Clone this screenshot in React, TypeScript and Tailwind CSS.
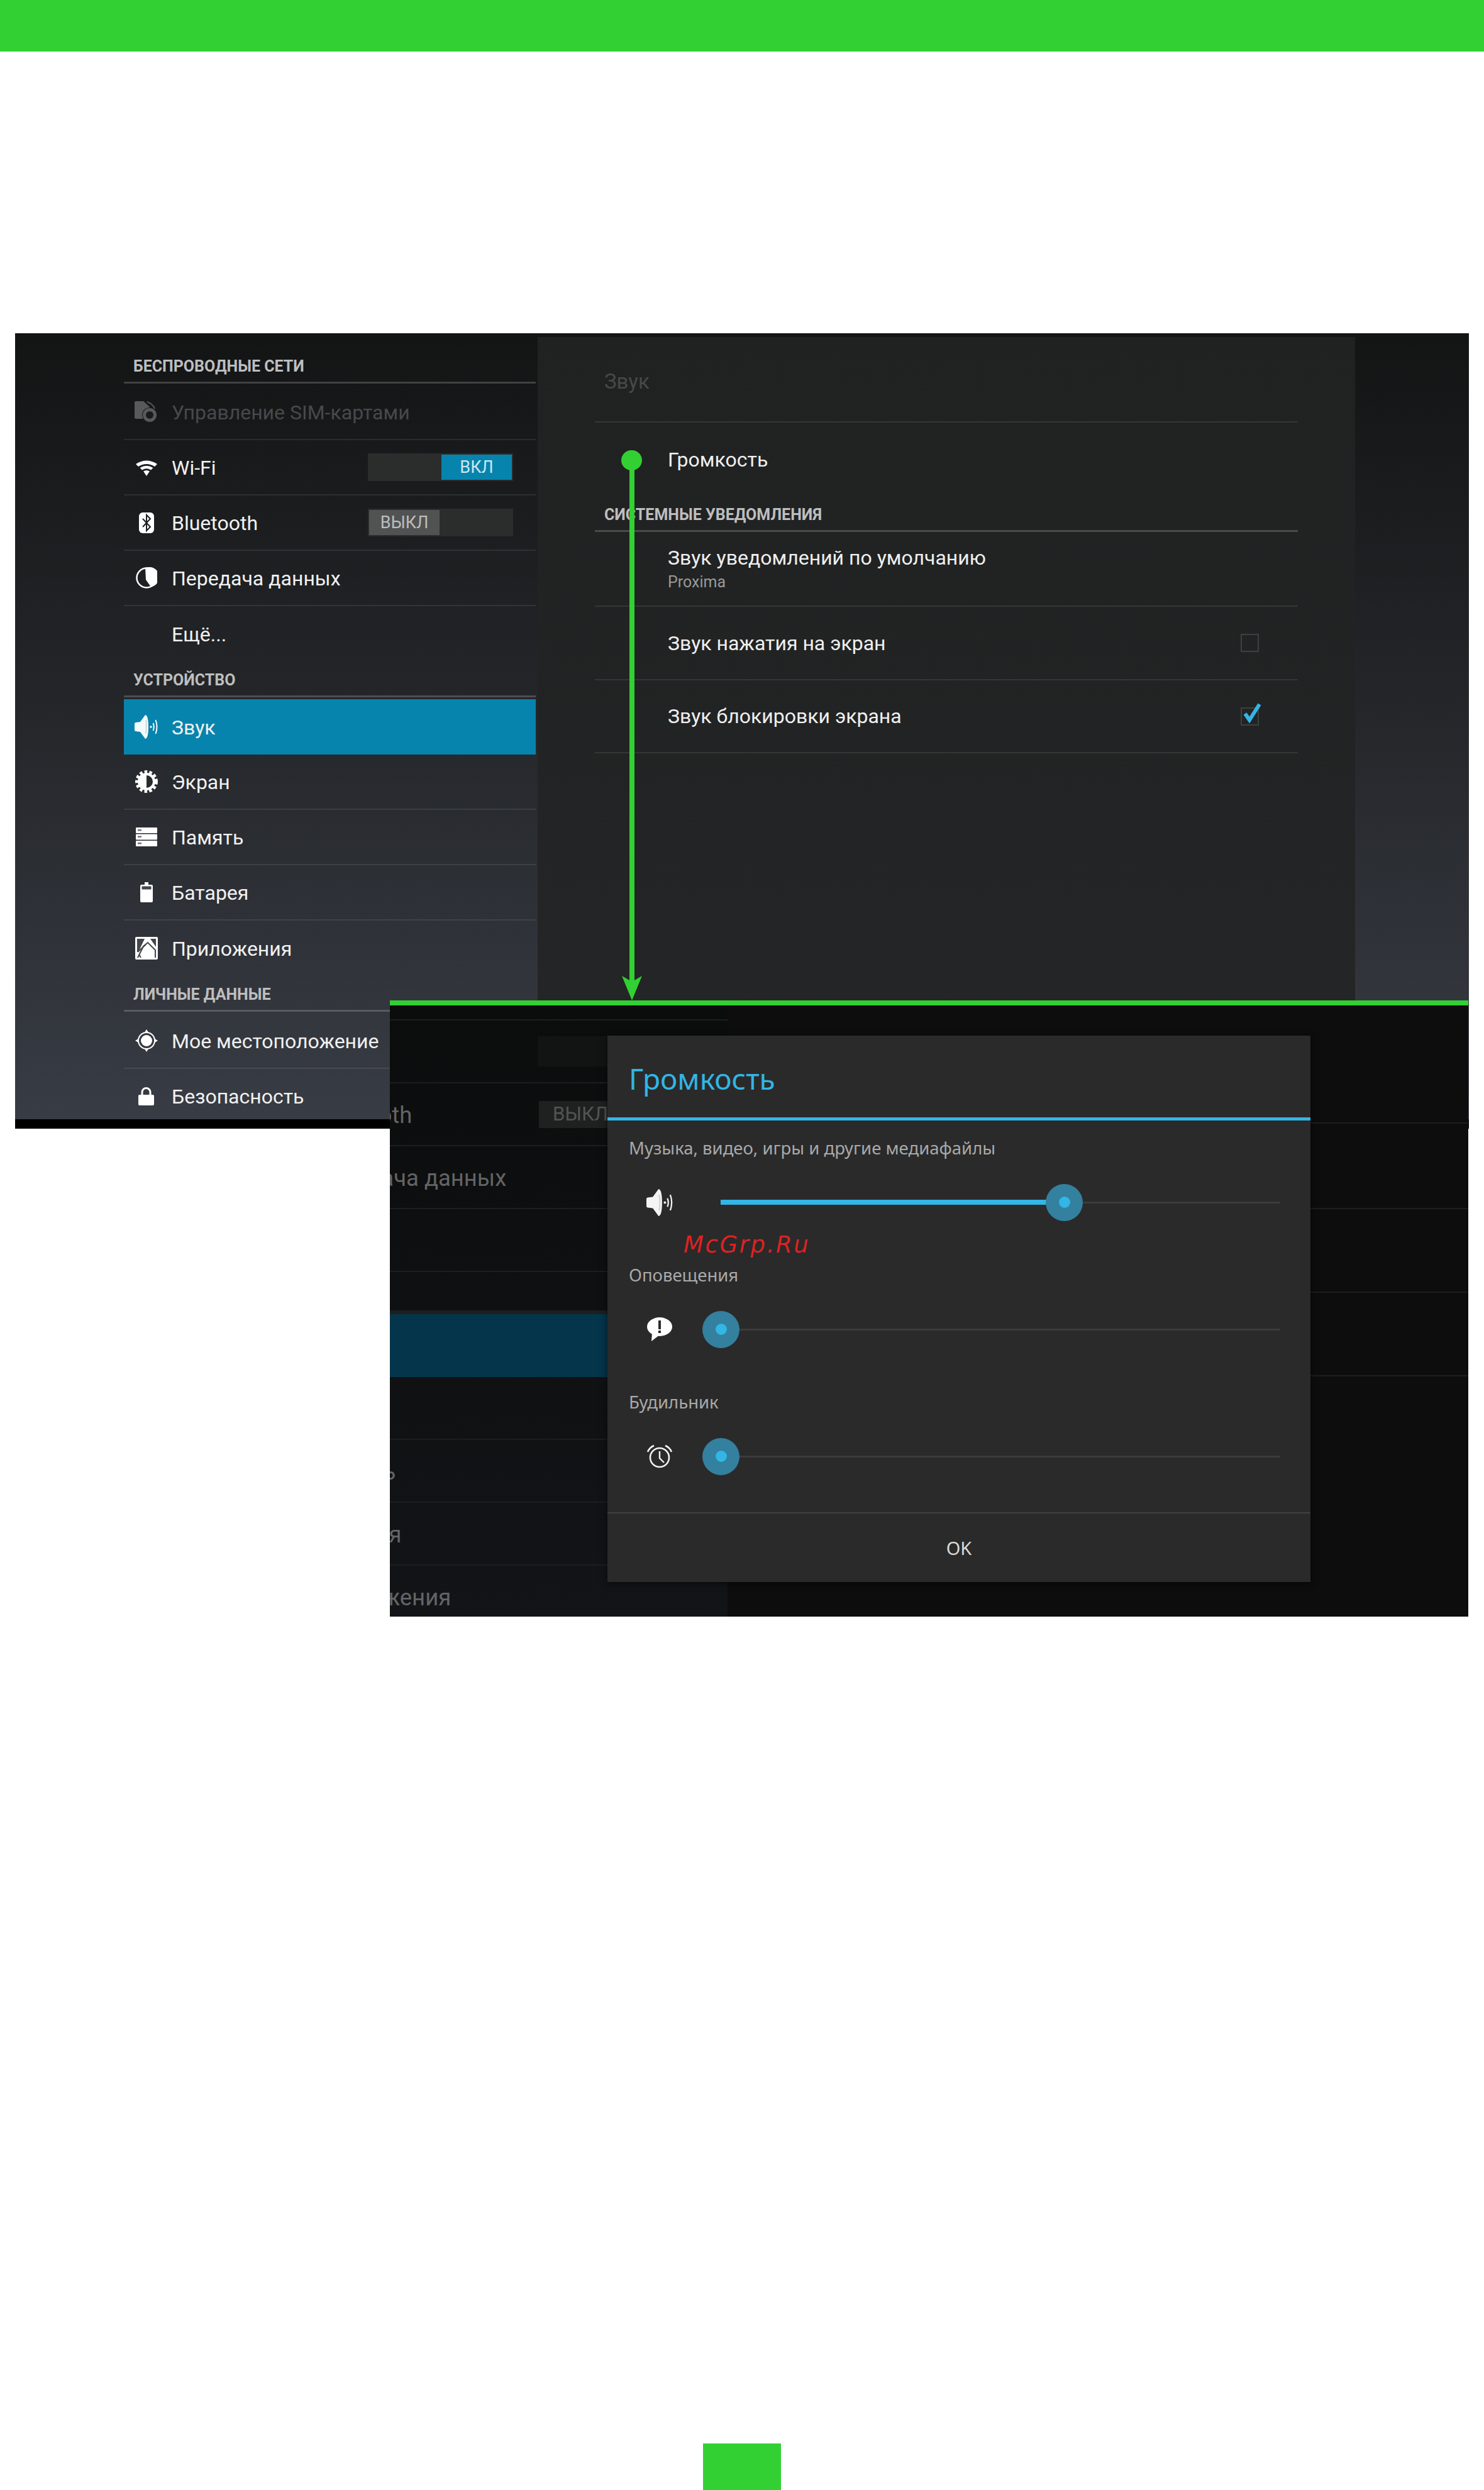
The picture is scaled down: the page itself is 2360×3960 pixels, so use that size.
import React from "react";

const Speaker = ({ c = "#fff", s = 38 }: { c?: string; s?: number }) => (
  <svg width={s} height={s} viewBox="0 0 38 38" fill="none">
    <path d="M0 14 Q0 12 2 12 L9 11 L17 0 C21 0 22 10 22 19 C22 28 21 38 17 38 L9 27 L2 26 Q0 26 0 24 Z" fill={c} />
    <path d="M18 8 C19 14 19 24 18 30" stroke="#00000022" strokeWidth="2" />
    <circle cx="26" cy="19" r="1.7" fill={c} />
    <path d="M29.5 13 Q32 19 29.5 25 M33.5 8 Q37.5 19 33.5 30" stroke={c} strokeWidth="2" />
  </svg>
);
const Sim = () => (
  <svg width="37" height="34" viewBox="0 0 37 34" fill="none">
    <path d="M2 0 H14 L24 9 V28 H2 Q0 28 0 26 V2 Q0 0 2 0Z" fill="#57595a" />
    <circle cx="24" cy="22" r="12" fill="#1a1b1d" />
    <circle cx="24" cy="22" r="8.5" stroke="#57595a" strokeWidth="5" />
    <path d="M20 1 Q29 4 32 12" stroke="#57595a" strokeWidth="2" />
  </svg>
);
const Wifi = () => (
  <svg width="34" height="27" viewBox="0 0 34 27" fill="none">
    <path d="M0 8 Q17 -3 34 8 L30 12 Q17 4 4 12Z" fill="#fff" />
    <path d="M6.5 14 Q17 7.5 27.5 14 L24 17.5 Q17 13 10 17.5Z" fill="#fff" />
    <path d="M12 19.5 Q17 16.5 22 19.5 L17 27Z" fill="#fff" />
  </svg>
);
const Bt = () => (
  <svg width="24" height="33" viewBox="0 0 24 33" fill="none">
    <rect width="24" height="33" rx="6" fill="#fff" />
    <path d="M6 10 L18 23 L12 29 V4 L18 10 L6 23" stroke="#1c1e20" strokeWidth="2" />
  </svg>
);
const Data = () => (
  <svg width="34" height="34" viewBox="0 0 34 34" fill="none">
    <circle cx="17" cy="17" r="15.5" stroke="#fff" strokeWidth="2.5" />
    <path d="M15 1 A16 16 0 1 1 24 31.5 L 16 20 Z" fill="#fff" />
  </svg>
);
const Sun = () => (
  <svg width="36" height="36" viewBox="0 0 36 36" fill="none">
    <circle cx="18" cy="18" r="15.5" stroke="#fff" strokeWidth="5" strokeDasharray="4.5 3.2" />
    <circle cx="18" cy="18" r="14" fill="#fff" />
    <path d="M18 8 A10 10 0 0 1 18 28 Z" fill="#282b2e" />
  </svg>
);
const Storage = () => (
  <svg width="34" height="30" viewBox="0 0 34 30" fill="none">
    {[0, 10.5, 21].map((y) => (
      <g key={y}>
        <rect y={y} width="34" height="9" rx="1" fill="#fff" />
        <rect x="3" y={y + 3} width="6" height="2.4" fill="#6d6f72" />
      </g>
    ))}
  </svg>
);
const Battery = () => (
  <svg width="20" height="32" viewBox="0 0 20 32" fill="none">
    <path d="M7 0 H13 V4 H18 Q20 4 20 6 V30 Q20 32 18 32 H2 Q0 32 0 30 V6 Q0 4 2 4 H7Z" fill="#fff" />
    <rect x="2.5" y="6.5" width="15" height="5" fill="#45474a" />
  </svg>
);
const Apps = () => (
  <svg width="36" height="36" viewBox="0 0 36 36" fill="none">
    <rect width="36" height="36" rx="2" fill="#fff" />
    <path d="M3 3 H15 L5 24 H3Z M24 3 H33 V16Z" fill="#44474a" />
    <path d="M4 33 L13 15 L20 9 L32 21 V33" stroke="#44474a" strokeWidth="2" />
    <path d="M4 24 L17 12 M9 33 L6 28" stroke="#44474a" strokeWidth="2" />
  </svg>
);
const Loc = () => (
  <svg width="36" height="36" viewBox="0 0 36 36" fill="none">
    <path d="M18 0 L21 5 H15Z M18 36 L21 31 H15Z M0 18 L5 15 V21Z M36 18 L31 15 V21Z" fill="#fff" />
    <circle cx="18" cy="18" r="13" stroke="#fff" strokeWidth="2" />
    <circle cx="18" cy="18" r="9" fill="#fff" />
  </svg>
);
const Lock = () => (
  <svg width="25" height="29" viewBox="0 0 25 29" fill="none">
    <rect y="12" width="25" height="17" rx="2" fill="#fff" />
    <path d="M6 13 V8 A6.5 6.5 0 0 1 19 8 V13" stroke="#fff" strokeWidth="3" />
  </svg>
);
const Bubble = () => (
  <svg width="40" height="38" viewBox="0 0 40 38" fill="none">
    <ellipse cx="20" cy="15" rx="20" ry="15" fill="#fff" />
    <path d="M8 25 L7 38 L20 28Z" fill="#fff" />
    <rect x="18" y="5" width="4" height="14" fill="#2a2a2a" />
    <rect x="18" y="21" width="4" height="4" fill="#2a2a2a" />
  </svg>
);
const Alarm = () => (
  <svg width="42" height="38" viewBox="0 0 42 38" fill="none">
    <circle cx="21" cy="21" r="15" stroke="#f2f2f2" strokeWidth="2.6" />
    <path d="M21 11 V22 L28 29" stroke="#f2f2f2" strokeWidth="2.4" />
    <path d="M2 12 Q5 5 12 2 M40 12 Q37 5 30 2" stroke="#f2f2f2" strokeWidth="2.6" />
  </svg>
);

const Header = ({ text, className = "" }: { text: string; className?: string }) => (
  <div className={`h-[54px] border-b-[3px] border-[#ffffff30] pl-[15px] pt-[2px] flex items-center text-[25px] font-bold text-[#bdbebf] ${className}`}>
    {text}
  </div>
);

const Row = ({
  icon,
  text,
  last,
  children,
  dim,
}: {
  icon?: React.ReactNode;
  text: string;
  last?: boolean;
  dim?: boolean;
  children?: React.ReactNode;
}) => (
  <div className={`h-[88px] flex items-center ${last ? "" : "border-b-2 border-[#ffffff16]"}`}>
    <div className="w-[71px] mr-[5px] flex justify-center">{icon}</div>
    <span className={`pt-[2px] text-[32px] ${dim ? "text-[#47494b]" : "text-[#f1f1f1]"}`}>{text}</span>
    {children}
  </div>
);

const Toggle = ({ on }: { on: boolean }) => (
  <div className={`ml-auto mr-[36px] w-[231px] h-[44px] bg-[#2b2d2d] p-[2px] flex ${on ? "justify-end" : "justify-start"}`}>
    <div className={`w-[112px] h-[40px] flex items-center justify-center text-[27px] ${on ? "bg-[#0784ae] text-[#cfe6ef]" : "bg-[#515353] text-[#bcbdbd]"}`}>
      {on ? "ВКЛ" : "ВЫКЛ"}
    </div>
  </div>
);

const PanelRow = ({ text, sub, h, check }: { text: string; sub?: string; h: string; check?: "on" | "off" }) => (
  <div className={`${h} border-b-2 border-[#353636] pl-[116px] pr-[62px] flex items-center justify-between`}>
    <div className="flex flex-col">
      <span className="text-[32px] leading-[40px] text-[#efefef]">{text}</span>
      {sub && <span className="pt-[2px] text-[25px] leading-[34px] text-[#999999]">{sub}</span>}
    </div>
    {check && (
      <div className="relative w-[29px] h-[29px] border-2 border-[#3f4040]">
        {check === "on" && (
          <svg className="absolute left-[2px] top-[-9px]" width="29" height="34" viewBox="0 0 29 34" fill="none">
            <path d="M3 17 L10 27 L26 2" stroke="#33b5e5" strokeWidth="6" />
          </svg>
        )}
      </div>
    )}
  </div>
);

const DimRow = ({ text, h = "h-[100px]", blue, children }: { text?: string; h?: string; blue?: boolean; children?: React.ReactNode }) => (
  <div className={`${h} flex items-center shrink-0 overflow-hidden ${blue ? "bg-[#04354a]" : "border-b-2 border-[#1d1e20]"}`}>
    {text && <span className="ml-[-121px] pt-[5px] whitespace-nowrap text-[36.5px] text-[#636465]">{text}</span>}
    {children}
  </div>
);

const Slider = ({ label, icon, value }: { label: string; icon: React.ReactNode; value: "high" | "zero" }) => (
  <div className="h-[172px] flex flex-col">
    <div className="h-[44px] pl-[34px] flex items-center text-[27.5px] text-[#a9a9a9]">{label}</div>
    <div className="mt-[36px] h-[56px] flex items-center">
      <div className="w-[166px] flex justify-center">{icon}</div>
      <div className="ml-[14px] relative w-[890px] h-[3px] bg-[#3b3b3b]">
        {value === "high" && <div className="absolute left-0 top-[-2.5px] w-[547px] h-[8px] bg-[#33b5e5]" />}
        <div className={`absolute top-[-28px] w-[59px] h-[59px] rounded-full bg-[#33809f] flex items-center justify-center ${value === "high" ? "left-[517px]" : "left-[-29px]"}`}>
          <div className="w-[18px] h-[18px] rounded-full bg-[#33b5e5]" />
        </div>
      </div>
    </div>
  </div>
);

export default function App() {
  return (
    <div className="relative w-[2360px] h-[3960px] bg-white overflow-hidden font-[Roboto,sans-serif]">
      <div className="h-[82px] bg-[#32d032]" />

      <div className="mt-[448px] ml-[24px] w-[2312px] h-[1265px] bg-black">
        <div className="h-[1250px] flex overflow-hidden bg-gradient-to-b from-[#131414] to-[#383c44] pl-[173px]">
          <div className="w-[655px] pt-[26px] shrink-0">
            <Header text="БЕСПРОВОДНЫЕ СЕТИ" className="mb-[2px]" />
            <Row dim icon={<Sim />} text="Управление SIM-картами" />
            <Row icon={<Wifi />} text="Wi-Fi"><Toggle on /></Row>
            <Row icon={<Bt />} text="Bluetooth"><Toggle on={false} /></Row>
            <Row icon={<Data />} text="Передача данных" />
            <Row last text="Ещё..." />
            <Header text="УСТРОЙСТВО" className="mt-[3px] mb-[3px]" />
            <div className="h-[88px] flex items-center bg-[#0784ae]">
              <div className="w-[71px] mr-[5px] flex justify-center"><Speaker c="#f4fbfd" /></div>
              <span className="pt-[2px] text-[32px] text-[#f1f1f1]">Звук</span>
            </div>
            <Row icon={<Sun />} text="Экран" />
            <Row icon={<Storage />} text="Память" />
            <Row icon={<Battery />} text="Батарея" />
            <Row last icon={<Apps />} text="Приложения" />
            <Header text="ЛИЧНЫЕ ДАННЫЕ" className="mt-[3px] mb-[3px]" />
            <Row icon={<Loc />} text="Мое местоположение" />
            <Row icon={<Lock />} text="Безопасность" />
          </div>

          <div className="ml-[3px] mt-[6px] w-[1300px] bg-gradient-to-b from-[#202121] to-[#242627] px-[91px]">
            <div className="h-[136px] border-b-2 border-[#353636] pl-[15px] pt-[8px] flex items-center text-[33px] text-[#474848]">Звук</div>
            <div className="h-[120px] pl-[116px] pb-[2px] flex items-center text-[32px] text-[#efefef]">Громкость</div>
            <Header text="СИСТЕМНЫЕ УВЕДОМЛЕНИЯ" />
            <PanelRow h="h-[119px]" text="Звук уведомлений по умолчанию" sub="Proxima" />
            <PanelRow h="h-[117px]" text="Звук нажатия на экран" check="off" />
            <PanelRow h="h-[116px]" text="Звук блокировки экрана" check="on" />
          </div>
        </div>
      </div>

      {/* green callout over the first screen */}
      <div className="absolute left-[988px] top-[716px] w-[33px] h-[32px] rounded-full bg-[#32d032]" />
      <div className="absolute left-[1001px] top-[740px] w-[8px] h-[820px] bg-[#32d032]" />
      <svg className="absolute left-[989px] top-[1552px]" width="32" height="39" viewBox="0 0 32 39">
        <path d="M0 0 L12 7 H20 L32 0 L16 39Z" fill="#32d032" />
      </svg>

      {/* second screen */}
      <div className="absolute left-[620px] top-[1591px] w-[1715px] h-[980px] border-t-[8px] border-[#32d032] bg-[#0d0d0d] flex overflow-hidden">
        <div className="w-[537px] shrink-0 flex flex-col bg-gradient-to-b from-[#0b0c0c] to-[#131417]">
          <DimRow h="h-[24px]" />
          <DimRow><div className="ml-[235px] w-[302px] h-[48px] bg-[#121313]" /></DimRow>
          <DimRow text="Bluetooth">
            <div className="absolute left-[237px] w-[300px] h-[43px] bg-[#1f2020] flex items-center pl-[22px] text-[31px] text-[#535454]">ВЫКЛ</div>
          </DimRow>
          <DimRow text="Передача данных" />
          <DimRow text="Ещё..." />
          <div className="h-[67px] shrink-0 border-b-[6px] border-[#1d1e20]" />
          <DimRow blue h="h-[100px]" />
          <DimRow text="Экран" />
          <DimRow text="Память" />
          <DimRow text="Батарея" />
          <DimRow text="Приложения" />
        </div>
        <div className="flex-1 flex flex-col">
          <div className="h-[188px] shrink-0 border-b-2 border-[#1d1e1e] pl-[235px] pt-[37px] text-[38px] text-[#2b2c2c]">Звук</div>
          <div className="h-[136px] shrink-0 border-b-2 border-[#1d1e1e]" />
          <div className="h-[133px] shrink-0 border-b-2 border-[#1d1e1e]" />
          <div className="h-[133px] shrink-0 border-b-2 border-[#1d1e1e]" />
        </div>

        <div className="absolute left-[346px] top-[48px] w-[1118px] h-[869px] bg-[#2a2a2a] shadow-[0_2px_10px_rgba(0,0,0,0.6)] flex flex-col font-['Noto_Sans',sans-serif]">
          <div className="h-[130px] pt-[6px] pl-[34px] flex items-center text-[46px] text-[#33b5e5] shrink-0">Громкость</div>
          <div className="h-[5px] bg-[#33b5e5] shrink-0" />
          <div className="pt-[22px] flex flex-col gap-[30px]">
            <Slider label="Музыка, видео, игры и другие медиафайлы" icon={<Speaker c="#f4f4f4" s={43} />} value="high" />
            <Slider label="Оповещения" icon={<Bubble />} value="zero" />
            <Slider label="Будильник" icon={<Alarm />} value="zero" />
          </div>
          <div className="mt-[25px] h-[111px] border-t-2 border-[#414141] flex items-center justify-center text-[29px] text-[#dadada]">OK</div>
          <div className="absolute left-[121px] top-[310px] italic text-[37px] leading-[46px] tracking-[2.6px] text-[#dd2222] font-['DejaVu_Sans',sans-serif]">McGrp.Ru</div>
        </div>
      </div>

      <div className="absolute left-[1118px] top-[3886px] w-[124px] h-[74px] bg-[#32d032]" />
    </div>
  );
}
